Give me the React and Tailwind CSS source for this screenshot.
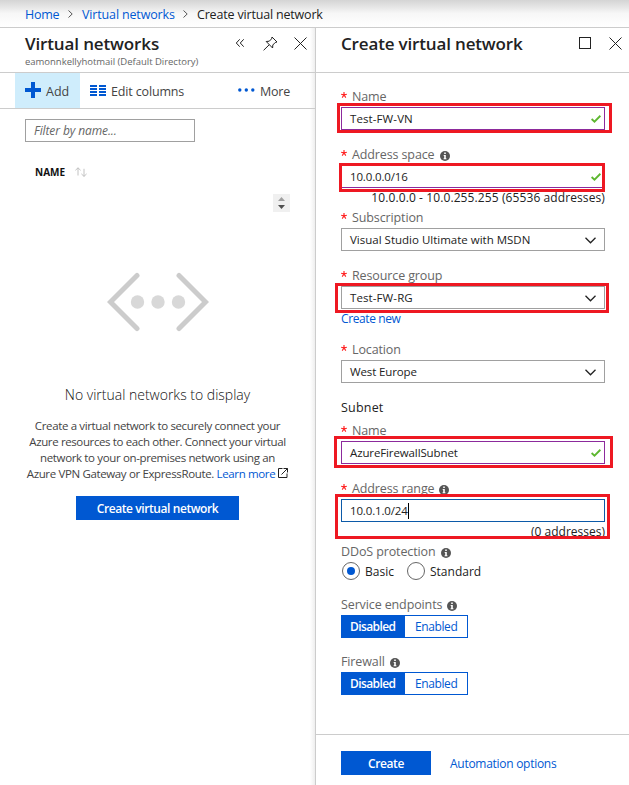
import React from "react";

function Close({ className = "" }) {
  return (
    <svg width="13" height="13" viewBox="0 0 13 13" className={`block shrink-0 ${className}`} fill="none" stroke="#222" strokeWidth="1">
      <path d="M0.5 0.5 12.5 12.5M12.5 0.5 0.5 12.5" />
    </svg>
  );
}

function Info() {
  return (
    <svg width="10" height="10" viewBox="0 0 10 10" className="mt-[2px] ml-[5px] block shrink-0">
      <circle cx="5" cy="5" r="5" fill="#555" />
      <path d="M4.2 1.6h1.6v1.4H4.2zM3.7 4h2.1v3.2h.6v1H3.6v-1h.6V5h-.5z" fill="#fff" />
    </svg>
  );
}

function Label({ children, required, info }) {
  return (
    <div className="flex h-5 items-center whitespace-nowrap text-[12.5px] text-[#666]">
      {required && (
        <svg width="6" height="6" viewBox="0 0 6 6" className="mr-[5px] mb-1 block shrink-0" stroke="#ff1a1a" strokeWidth="1.1" fill="none">
          <path d="M3 0v3M3 3 0.2 2.2M3 3l2.8-.8M3 3 1.2 5.6M3 3l1.8 2.6" />
        </svg>
      )}
      <span className="tracking-[-0.12px]">{children}</span>
      {info && <Info />}
    </div>
  );
}

function Highlight({ className }) {
  return <div className={`pointer-events-none absolute z-10 border-3 border-[#ee1822] ${className}`} />;
}

function Field({ label, value, valueClass = "", kind, info, border = "border-[#a0a0a0]", mark }) {
  return (
    <div className="relative">
      <Label required info={info}>{label}</Label>
      <div className={`flex h-[23px] w-[264px] items-center border bg-white pl-2 text-[11.5px] text-[#222] ${border}`}>
        <span className={`whitespace-nowrap ${valueClass}`}>{value}</span>
        {kind === "caret" && <span className="h-4 w-px bg-black" />}
        {kind === "check" && (
          <svg width="10" height="8" viewBox="0 0 10 8" className="mr-[3px] ml-auto block" fill="none" stroke="#5db72f" strokeWidth="1.9">
            <path d="M0.6 4 3.5 6.6 9.4 0.8" />
          </svg>
        )}
        {kind === "select" && (
          <svg width="11" height="7" viewBox="0 0 11 7" className="mt-px mr-2 ml-auto block" fill="none" stroke="#222" strokeWidth="1.3">
            <path d="M0.5 0.8 5.5 5.8 10.5 0.8" />
          </svg>
        )}
      </div>
      {mark && <Highlight className={mark} />}
    </div>
  );
}

function Toggle() {
  return (
    <div className="flex h-[23px] w-[127px] border border-[#0058d2] text-[12px] leading-[22px]">
      <div className="w-[63px] bg-[#0058d2] pl-2 font-semibold text-white"><span className="tracking-[-0.6px]">Disabled</span></div>
      <div className="flex-1 pl-[10px] text-[#0058d2]"><span className="tracking-[-0.4px]">Enabled</span></div>
    </div>
  );
}

function Crumb() {
  return (
    <svg width="5" height="8" viewBox="0 0 5 8" className="mb-px block shrink-0" fill="none" stroke="#555">
      <path d="M0.5 0.5 4.2 4 0.5 7.5" />
    </svg>
  );
}

export default function App() {
  return (
    <div className="flex h-[785px] w-[629px] flex-col overflow-hidden bg-white font-['Open_Sans','Noto_Sans',sans-serif]">
      <nav className="flex h-7 shrink-0 items-center border-b border-[#ccc] bg-linear-to-b from-[#d4d4d4] via-[#f7f7f7] via-50% to-white pt-[3px] pl-[25px] text-[12.5px] whitespace-nowrap text-[#222]">
        <span className="w-[35px] tracking-[-0.3px] text-[#0058d2]">Home</span>
        <span className="mr-[9px] ml-2 pb-[2px]"><Crumb /></span>
        <span className="w-[93px] tracking-[-0.15px] text-[#0058d2]">Virtual networks</span>
        <span className="mr-[9px] ml-2 pb-[2px]"><Crumb /></span>
        <span className="tracking-[-0.18px]">Create virtual network</span>
      </nav>

      <div className="flex min-h-0 flex-1">
        <section className="flex w-[316px] shrink-0 flex-col border-r border-[#ccc] bg-linear-to-l from-[#eee] via-white via-[5px] to-white">
          <header className="flex h-[45px] shrink-0 border-b border-[#ccc] pl-[25px]">
            <div className="w-[210px] whitespace-nowrap">
              <h1 className="mt-[5px] text-[17px] leading-[22px] font-semibold tracking-[-0.13px] text-[#222]">Virtual networks</h1>
              <p className="text-[9.5px] leading-[13px] tracking-[-0.02px] text-[#666]">eamonnkellyhotmail (Default Directory)</p>
            </div>
            <svg width="9" height="8" viewBox="0 0 9 8" className="mt-[11px] block" fill="none" stroke="#222">
              <path d="M4.7.3 1.300 4l3.400 3.700M8.700.3 5.300 4l3.400 3.700" />
            </svg>
            <svg width="15" height="15" viewBox="0 0 15 15" className="mt-2 ml-[19px] block" fill="none" stroke="#222">
              <path d="M9 1 14 6 12.2 6.5 9.8 9 9.6 12 3.2 5.5 6.3 5.2 8.6 2.8ZM6.2 8.8.6 14.3" />
            </svg>
            <Close className="mt-[9px] ml-[16px]" />
          </header>
          <div className="flex h-9 shrink-0 items-center border-b border-[#ccc] pl-[15px] text-[12.5px] text-[#444]">
            <div className="flex h-full w-[65px] items-center bg-[#cfedfc] pl-[10px]">
              <svg width="16" height="16" viewBox="0 0 16 16" className="mb-px block"><path d="M6 0h4v6h6v4h-6v6H6v-6H0V6h6z" fill="#0058d2" /></svg>
              <span className="mt-[3px] ml-[5px]">Add</span>
            </div>
            <svg width="16" height="11" viewBox="0 0 16 11" className="ml-[10px] block"><path d="M0 0h7v2H0zM0 3h7v2H0zM0 6h7v2H0zM0 9h7v2H0zM9 0h7v2H9zM9 3h7v2H9zM9 6h7v2H9zM9 9h7v2H9z" fill="#0058d2" /></svg>
            <span className="mt-[3px] ml-[5px] w-[127px] tracking-[-0.15px] whitespace-nowrap">Edit columns</span>
            <svg width="17" height="4" viewBox="0 0 17 4" className="mb-[2px] block" fill="#0058d2"><circle cx="1.8" cy="2" r="1.7" /><circle cx="8.3" cy="2" r="1.7" /><circle cx="14.8" cy="2" r="1.7" /></svg>
            <span className="mt-[3px] ml-[5px] tracking-[-0.2px]">More</span>
          </div>

          <div className="mt-[10px] ml-[25px] flex h-[23px] w-[170px] items-center border border-[#a0a0a0] bg-white pl-2 text-[12px] text-[#666] italic">
            <span className="tracking-[-0.1px]">Filter by name...</span>
          </div>
          <div className="mt-[22px] ml-[35px] flex h-4 items-center text-[10px] font-bold text-[#111]">
            <span>NAME</span>
            <svg width="12" height="10" viewBox="0 0 12 10" className="ml-[10px] block" fill="none" stroke="#bbb" strokeWidth="0.9">
              <path d="M3 8.5V.8M.4 3.3 3 .8 5.6 3.3M9 1.8v7.6M6.4 6.9 9 9.4l2.6-2.5" />
            </svg>
          </div>
          <svg width="17" height="18" viewBox="0 0 17 18" className="mt-[14px] ml-[273px] block shrink-0">
            <path fill="#f0f0f0" d="M0 0h17v18H0z" />
            <path fill="#a0a0a0" d="M8.5 3 12 7H5z" />
            <path fill="#505050" d="M8.5 15 12 11H5z" />
          </svg>

          <div className="flex flex-col items-center">
            <svg width="102" height="60" viewBox="0 0 102 60" className="mt-[60px] block" fill="none">
              <path d="M30 3.5 3.5 30 30 56.5M72 3.5 98.5 30 72 56.5" stroke="#ccc" strokeWidth="5" strokeLinecap="round" />
              <g fill="#d8d8d8"><circle cx="30.500" cy="30" r="6.700" /><circle cx="51" cy="30" r="6.700" /><circle cx="71.500" cy="30" r="6.700" /></g>
            </svg>
            <h2 className="mt-[53px] text-[14px] leading-[20px] font-light text-[#111] whitespace-nowrap">No virtual networks to display</h2>
            <p className="mt-[13px] text-center text-[11.5px] leading-4 whitespace-nowrap text-[#444]">
              <span className="block tracking-[-0.36px]">Create a virtual network to securely connect your</span>
              <span className="block tracking-[-0.38px]">Azure resources to each other. Connect your virtual</span>
              <span className="block tracking-[-0.36px]">network to your on-premises network using an</span>
              <span className="flex items-center justify-center tracking-[-0.36px]">
                <span>Azure VPN Gateway or ExpressRoute. <a className="text-[#0058d2]">Learn more</a></span>
                <svg width="10" height="10" viewBox="0 0 10 10" className="mb-[3px] ml-[3px] block" fill="none" stroke="#222">
                  <path d="M4.500 .5H.5v9h8.500V5.500M5.500.5H9.500V4.500M9.500.5 3.500 6.500" />
                </svg>
              </span>
            </p>
            <button className="mt-[14px] h-6 w-[163px] bg-[#0058d2] pt-px text-[12px] font-semibold whitespace-nowrap text-white"><span className="tracking-[-0.42px]">Create virtual network</span></button>
          </div>
        </section>

        <section className="flex min-w-0 flex-1 flex-col">
          <header className="flex h-[45px] shrink-0 border-b border-[#ccc] pl-[25px]">
            <h1 className="mt-[5px] w-[238px] text-[17px] leading-[22px] font-semibold tracking-[-0.16px] whitespace-nowrap text-[#222]">Create virtual network</h1>
            <div className="mt-[9px] h-3 w-3 border border-[#222]" />
            <Close className="mt-[9px] ml-[18px]" />
          </header>
          <div className="flex flex-1 flex-col pt-[14px] pl-[25px]">
            <Field label="Name" value="Test-FW-VN" valueClass="tracking-[0.1px]" kind="check" border="border-[#8c2a9c]" mark="top-4 -left-1 h-[30px] w-[275px]" />
            <div className="h-[15px]" />
            <Field label="Address space" info value="10.0.0.0/16" valueClass="tracking-[-0.15px]" kind="check" border="border-[#8c2a9c]" mark="top-[18px] -left-[2px] h-[29px] w-[266px]" />
            <div className="h-5 w-[264px] text-right text-[12px] leading-[19px] tracking-[0.1px] whitespace-nowrap text-[#222]">10.0.0.0 - 10.0.255.255 (65536 addresses)</div>
            <Field label="Subscription" value="Visual Studio Ultimate with MSDN" kind="select" />
            <div className="h-[15px]" />
            <Field label="Resource group" value="Test-FW-RG" valueClass="tracking-[0.1px]" kind="select" mark="top-[17px] -left-[6px] h-[30px] w-[274px]" />
            <div className="h-[31px] text-[12px] leading-[19px] text-[#0058d2]"><span className="tracking-[-0.4px]">Create new</span></div>
            <Field label="Location" value="West Europe" valueClass="tracking-[-0.12px]" kind="select" />
            <div className="mt-[14px] h-6 text-[12.5px] leading-[21px] text-[#222]"><span className="tracking-[0.2px]">Subnet</span></div>
            <Field label="Name" value="AzureFirewallSubnet" valueClass="tracking-[-0.12px]" kind="check" border="border-[#8c2a9c]" mark="top-[15px] -left-[7px] h-[32px] w-[279px]" />
            <div className="h-[15px]" />
            <Field label="Address range" info value="10.0.1.0/24" valueClass="tracking-[-0.15px]" kind="caret" border="border-[#0c5aa8]" mark="top-[15px] -left-[6px] h-[45px] w-[275px]" />
            <div className="h-5 w-[264px] text-right text-[12px] leading-[19px] text-[#222]">(0 addresses)</div>
            <Label info>DDoS protection</Label>
            <div className="flex h-[18px] items-center text-[12px] text-[#222]">
              <span className="ml-px flex size-[18px] items-center justify-center rounded-full border border-[#666]"><span className="size-2 rounded-full bg-[#0058d2]" /></span>
              <span className="mt-[2px] ml-[5px] w-[42px]">Basic</span>
              <span className="size-[18px] rounded-full border border-[#666]" />
              <span className="mt-[2px] ml-[5px]">Standard</span>
            </div>
            <div className="h-[15px]" />
            <Label info>Service endpoints</Label>
            <Toggle />
            <div className="h-[14px]" />
            <Label info>Firewall</Label>
            <Toggle />
          </div>
          <footer className="flex h-[51px] shrink-0 items-start border-t border-[#ccc] pt-4 pl-[25px] text-[12px]">
            <button className="h-6 w-[90px] bg-[#0058d2] pt-px font-semibold text-white"><span className="tracking-[-0.4px]">Create</span></button>
            <a className="ml-[19px] leading-[26px] tracking-[-0.28px] text-[#0058d2]">Automation options</a>
          </footer>
        </section>
      </div>
    </div>
  );
}
